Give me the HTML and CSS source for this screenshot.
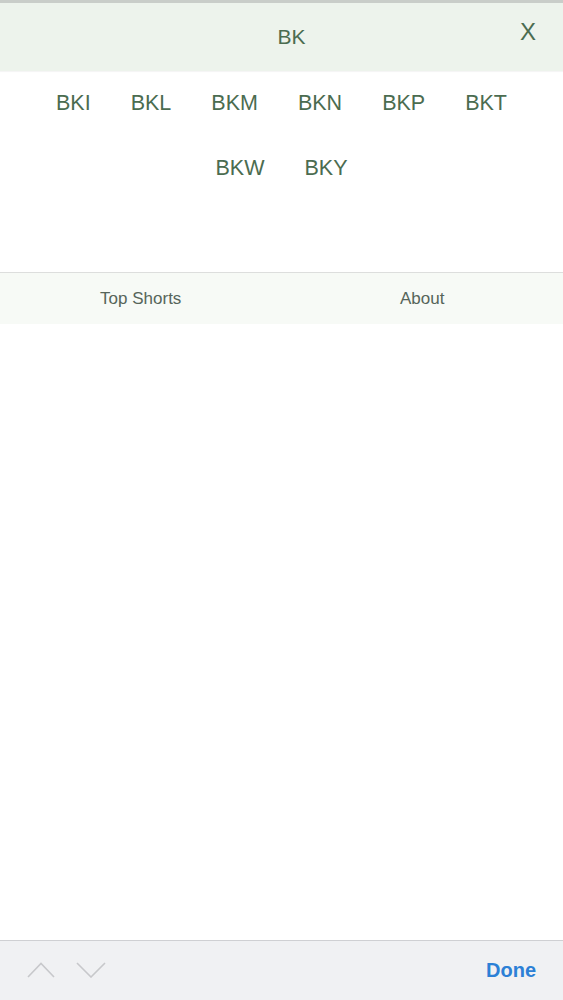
FILE: index.html
```html
<!DOCTYPE html>
<html>
  <head>
    <meta charset="utf-8">
    <meta name="viewport" content="width=device-width, initial-scale=1">
    <title>BK</title>
    <link rel="stylesheet" href="styles.css">
  </head>
  <body>
    <div class="page">
      <header class="topbar">
        <h1 class="title">BK</h1>
        <a class="close" href="#">X</a>
      </header>
      <nav class="codes">
        <a href="#">BKI</a>
        <a href="#">BKL</a>
        <a href="#">BKM</a>
        <a href="#">BKN</a>
        <a href="#">BKP</a>
        <a href="#">BKT</a>
        <a href="#">BKW</a>
        <a href="#">BKY</a>
      </nav>
      <div class="links">
        <a href="#">Top Shorts</a>
        <a href="#">About</a>
      </div>
      <div class="blank"></div>
      <footer class="toolbar">
        <div class="arrows">
          <svg width="28" height="16" viewBox="0 0 28 16"><polyline points="1,15 14,1.5 27,15" /></svg>
          <svg width="30" height="16" viewBox="0 0 30 16"><polyline points="1,1 15,15 29,1" /></svg>
        </div>
        <a class="done" href="#">Done</a>
      </footer>
    </div>
  </body>
</html>
```

FILE: styles.css
```css
body {
  margin: 0;
  font-family: "Liberation Sans", Arial, sans-serif;
  background: #fff;
}

a {
  text-decoration: none;
}

.page {
  display: flex;
  flex-direction: column;
  height: 1000px;
}

.topbar {
  display: flex;
  align-items: center;
  height: 68px;
  border-top: 3px solid #c9cdc9;
  background: #edf3ec;
  box-shadow: 0 1px 1px rgba(0, 0, 0, 0.04);
}

.title {
  flex: 1;
  margin: 0;
  padding-left: 63px;
  text-align: center;
  font-size: 21px;
  font-weight: normal;
  color: #4b6c50;
}

.close {
  padding: 0 27px 10px 0;
  font-size: 24px;
  color: #4b6c50;
}

.codes {
  display: flex;
  flex-wrap: wrap;
  justify-content: center;
  align-content: flex-start;
  height: 201px;
}

.codes a {
  padding: 0 20px;
  line-height: 65px;
  font-size: 21.5px;
  color: #4b6c50;
}

.links {
  display: grid;
  grid-template-columns: 1fr 1fr;
  border-top: 1px solid #dddedd;
  background: #f7faf6;
}

.links a {
  line-height: 51px;
  text-align: center;
  font-size: 17px;
  color: #56655a;
}

.blank {
  flex: 1;
}

.toolbar {
  display: flex;
  align-items: center;
  justify-content: space-between;
  height: 59px;
  padding: 0 27px 0 27px;
  border-top: 1px solid #cfd0d3;
  background: #f0f1f3;
}

.arrows {
  display: flex;
  gap: 21px;
  padding-bottom: 2px;
}

.arrows polyline {
  fill: none;
  stroke: #c7c8cb;
  stroke-width: 1.6;
}

.done {
  font-size: 20px;
  font-weight: bold;
  color: #2c80d6;
}
```
